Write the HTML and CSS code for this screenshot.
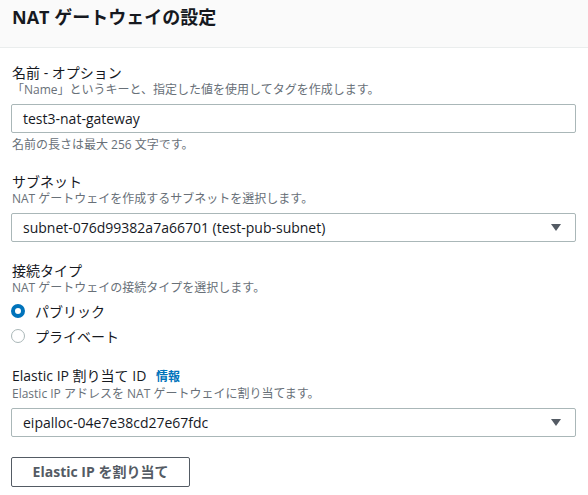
FILE: index.html
```html
<!DOCTYPE html>
<html lang="ja">
<head>
<meta charset="utf-8">
<link rel="stylesheet" href="styles.css">
</head>
<body>
<div class="panel">
  <div class="panel-header">
    <h2 class="title">NAT ゲートウェイの設定</h2>
  </div>
  <div class="panel-body">
    <div class="field">
      <div class="label">名前 - オプション</div>
      <div class="desc">「Name」というキーと、指定した値を使用してタグを作成します。</div>
      <div class="input">test3-nat-gateway</div>
      <div class="constraint">名前の長さは最大 256 文字です。</div>
    </div>

    <div class="field">
      <div class="label">サブネット</div>
      <div class="desc">NAT ゲートウェイを作成するサブネットを選択します。</div>
      <div class="input select">
        <span>subnet-076d99382a7a66701 (test-pub-subnet)</span>
        <span class="caret"></span>
      </div>
    </div>

    <div class="field field-radios">
      <div class="label">接続タイプ</div>
      <div class="desc">NAT ゲートウェイの接続タイプを選択します。</div>
      <div class="radios">
        <div class="radio-row"><span class="radio checked"></span><span>パブリック</span></div>
        <div class="radio-row"><span class="radio"></span><span>プライベート</span></div>
      </div>
    </div>

    <div class="field">
      <div class="label">Elastic IP 割り当て ID <span class="info">情報</span></div>
      <div class="desc">Elastic IP アドレスを NAT ゲートウェイに割り当てます。</div>
      <div class="input select">
        <span>eipalloc-04e7e38cd27e67fdc</span>
        <span class="caret"></span>
      </div>
    </div>

    <button class="btn">Elastic IP を割り当て</button>
  </div>
</div>
</body>
</html>
```
FILE: styles.css
```css
* { box-sizing: border-box; }
html, body {
  margin: 0;
  padding: 0;
  background: #ffffff;
}
body {
  font-family: "Open Sans", "Noto Sans CJK JP", sans-serif;
  color: #16191f;
  width: 588px;
  height: 495px;
  overflow: hidden;
}
.panel-header {
  background: #fafafa;
  border-bottom: 1px solid #eaeded;
  height: 48px;
  padding: 5px 12px 0;
}
.title {
  margin: 0;
  font-size: 18px;
  line-height: 24px;
  font-weight: 700;
  color: #16191f;
}
.panel-body {
  padding: 16px 12px 0 11px;
}
.field {
  margin-bottom: 20px;
}
.field-radios {
  margin-bottom: 19px;
}
.label {
  font-size: 14px;
  line-height: 18px;
  padding-left: 1px;
  color: #16191f;
}
.info {
  color: #0073bb;
  font-size: 12px;
  font-weight: 700;
  margin-left: 6px;
}
.desc {
  font-size: 12px;
  line-height: 16px;
  color: #687078;
  padding-left: 1px;
}
.input {
  margin-top: 6px;
  height: 29px;
  width: 565px;
  border: 1px solid #aab7b8;
  border-radius: 2px;
  padding: 0 11px;
  font-size: 14px;
  line-height: 27px;
  color: #16191f;
  display: flex;
  align-items: center;
}
.select {
  justify-content: space-between;
  padding-right: 14px;
}
.caret {
  width: 0;
  height: 0;
  border-left: 5px solid transparent;
  border-right: 5px solid transparent;
  border-top: 7px solid #545b64;
}
.constraint {
  margin-top: 4px;
  font-size: 12px;
  line-height: 16px;
  color: #687078;
  padding-left: 1px;
}
.radios {
  margin-top: 2px;
}
.radio-row {
  display: flex;
  align-items: center;
  gap: 10px;
  height: 25px;
  font-size: 14px;
  color: #16191f;
}
.radio {
  width: 14px;
  height: 14px;
  border-radius: 50%;
  border: 1.5px solid #aab7b8;
  background: #fff;
  flex: none;
}
.radio.checked {
  border: 4px solid #0073bb;
}
.btn {
  display: block;
  margin-top: 1px;
  width: 179px;
  height: 30px;
  border: 1px solid #545b64;
  border-radius: 2px;
  background: #fff;
  color: #545b64;
  font-family: "Open Sans", "Noto Sans CJK JP", sans-serif;
  font-size: 14px;
  font-weight: 700;
  padding: 0;
  line-height: 28px;
}
```
